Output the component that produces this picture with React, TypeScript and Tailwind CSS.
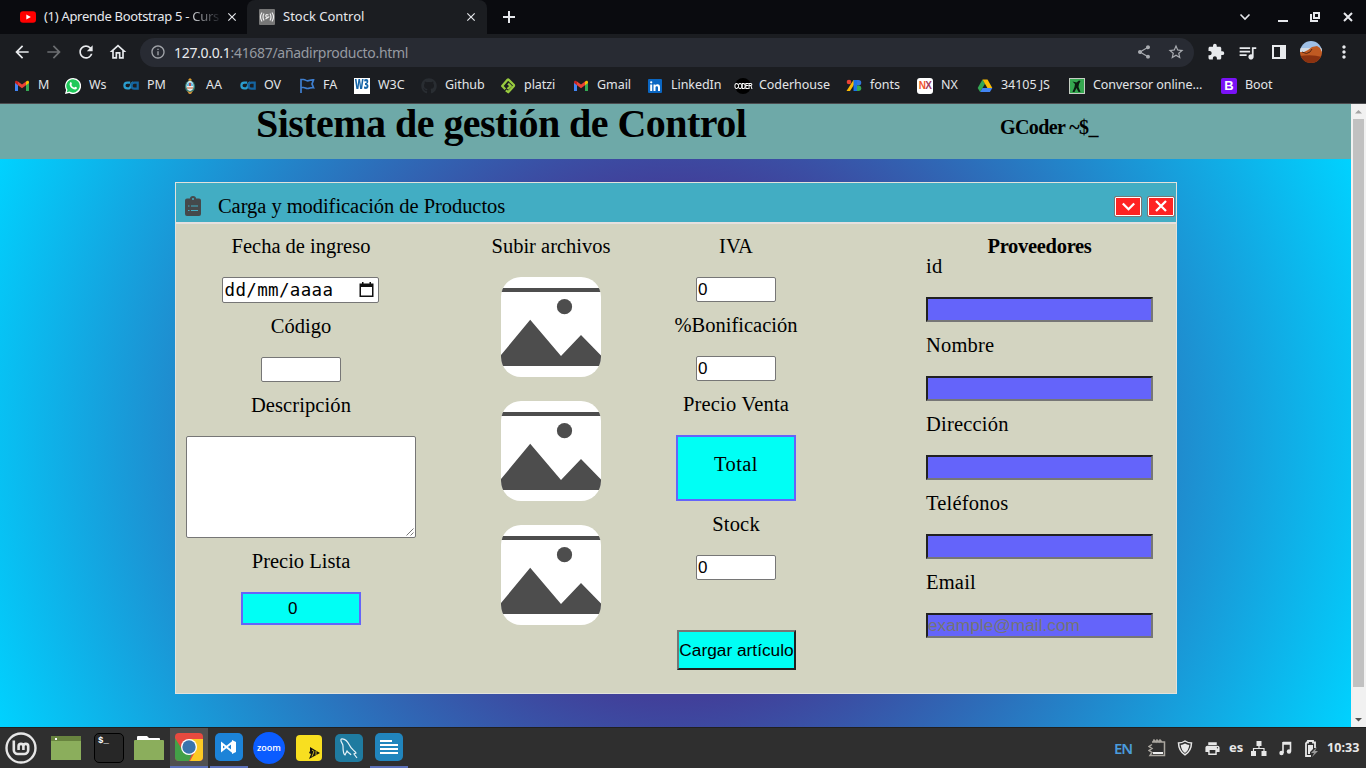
import React from "react";
import { FaClipboardList, FaGithub } from "react-icons/fa";
import {
  MdArrowBack, MdArrowForward, MdRefresh, MdOutlineHome, MdOutlineInfo, MdShare, MdStarOutline,
  MdExtension, MdQueueMusic, MdPrint, MdClose, MdMoreVert,
} from "react-icons/md";

const ui = "font-['Noto_Sans',sans-serif]";
const serif = "font-['Liberation_Serif',serif]";
const sans = "font-['Liberation_Sans',sans-serif]";

const Gmail = () => (
  <svg width="16" height="16" viewBox="0 0 16 16">
    <path d="M1 4v9h3V6.200z" fill="#4285f4" />
    <path d="M15 4v9h-3V6.200z" fill="#34a853" />
    <path d="M12 3.600 13 3c1-.6 2 0 2 1.200V5l-3 2.200z" fill="#fbbc04" />
    <path d="M4 3.600 3 3C2 2.400 1 3 1 4.200V5l3 2.200z" fill="#c5221f" />
    <path d="m4 3.600 4 3 4-3v3.600l-4 3-4-3z" fill="#ea4335" />
  </svg>
);
const WhatsApp = () => (
  <svg width="16" height="16" viewBox="0 0 16 16">
    <path d="M8 0a8 8 0 1 1-3.800 15L0 16l1.100-4A8 8 0 0 1 8 0z" fill="#fff" />
    <path d="M8 1.200a6.700 6.700 0 1 1-3.500 12.400l-2.700.7.700-2.600A6.700 6.700 0 0 1 8 1.200z" fill="#1fc95a" />
    <path d="M5.400 4.200c.6-.4 1 0 1.500 1.500.1.500-.6.9-.5 1.200.7 1.400 1.500 2.100 2.900 2.700.4 0 .7-.9 1.100-.8 1.700.7 1.800.9 1.400 1.700-.8 1.400-2.600 1.200-4.500 0C5.100 9 3.600 6.300 5.400 4.200z" fill="#fff" />
  </svg>
);
const Ca = () => (
  <svg width="16" height="16" viewBox="0 0 16 16" fill="none" strokeWidth="2.200">
    <path d="M7.200 4.600H4.300a2.900 2.900 0 0 0 0 5.800H6c2 0 2-5.800 4-5.800" stroke="#2b9fd0" />
    <path d="M14.700 3.400v7.200h-3.200a2.900 2.900 0 0 1 0-5.900h3" stroke="#1564a0" />
  </svg>
);
const Arms = () => (
  <svg width="16" height="16" viewBox="0 0 16 16">
    <path d="m8 0 2 2-2 1.500L6 2z" fill="#e0a030" />
    <ellipse cx="8" cy="8.500" rx="5" ry="6" fill="#357f75" />
    <ellipse cx="8" cy="8" rx="3.600" ry="5" fill="#e8eef2" />
    <path d="M4.500 8A3.600 5 0 0 1 11.500 8z" fill="#63bce9" />
    <path d="M7.200 5h1.600v3H7.200z" fill="#c53428" />
    <path d="M5 9h6v2H5z" fill="#d7a58c" />
    <path d="m5 13 3 1 3-1-2 3H7z" fill="#c98b35" />
  </svg>
);
const Flag = () => (
  <svg width="16" height="16" viewBox="0 0 16 16" fill="none" stroke="#3f7fd0" strokeWidth="1.700">
    <path d="M2 15V1.500h2.500c2 0 2 1.300 4 1.300 2.500 0 3-1.300 6-.9l-1.500 4 1.500 3.800c-3-.5-3.500.8-6 .8-2 0-2-1-4-1H2" />
  </svg>
);
const W3 = () => (
  <span className="flex size-4 items-center justify-center bg-white font-['Open_Sans',sans-serif] text-[12px] leading-none font-extrabold text-[#1565a8]">
    <span className="scale-x-[0.72] scale-y-110 pb-px">W3</span>
  </span>
);
const Platzi = () => (
  <svg width="16" height="16" viewBox="0 0 16 16" fill="none" stroke="#98ca3f" strokeWidth="2.300">
    <path d="M5.300 11.300 2.200 8l5.300-6.200q.6-.6 1.200 0l5 5q.6.700 0 1.400l-5.500 6-2.400-1.800M8 5.600 10.700 8 7.500 11" strokeLinejoin="round" />
  </svg>
);
const LinkedIn = () => (
  <svg width="16" height="16" viewBox="0 0 16 16">
    <rect x="1" y="1" width="14" height="14" rx="1" fill="#0a66c2" />
    <path d="M3.200 6.500h2V13h-2zM4.200 3.200a1.150 1.150 0 1 1 0 2.300 1.150 1.150 0 0 1 0-2.300zM6.500 6.500h2v1c1-1.700 4.500-1.700 4.500 1.500v4h-2V9.500c0-1.800-2.500-1.800-2.500 0V13h-2z" fill="#fff" />
  </svg>
);
const Coder = () => (
  <span className="flex size-4 items-center justify-center rounded-full bg-black font-['Liberation_Sans',sans-serif] text-[6px] leading-none font-bold tracking-[-0.8px] text-white">
    <span className="scale-y-[1.4]">CODER</span>
  </span>
);
const Fonts = () => (
  <svg width="16" height="16" viewBox="0 0 16 16">
    <circle cx="3" cy="4" r="2.300" fill="#ea4335" />
    <path d="M7.500 2H11L4 13H.5z" fill="#fbbc04" />
    <path d="M7.500 2H11v11H7.500z" fill="#1a73e8" />
    <path d="M11 2h1.500a2.700 2.700 0 0 1 0 5.500H11z" fill="#3275dc" />
    <path d="M11 7.500h1.500a2.700 2.700 0 0 1 0 5.500H11z" fill="#34a853" />
  </svg>
);
const Nx = () => (
  <span className="flex size-4 items-center justify-center rounded-[3px] bg-white font-['Liberation_Sans',sans-serif] text-[10px] font-bold tracking-[-0.7px] text-[#f0562b]">
    N<span className="text-[#a03a60]">X</span>
  </span>
);
const Drive = () => (
  <svg width="16" height="16" viewBox="0 0 16 16">
    <path d="M5.500 1.500.7 10l2.400 4L8 5.700z" fill="#34a853" />
    <path d="M5.500 1.500h5l4.800 8.500h-4.900z" fill="#fbbc04" />
    <path d="M5.500 10h9.800l-2.400 4H3.100z" fill="#4285f4" />
  </svg>
);
const Conv = () => (
  <svg width="16" height="16" viewBox="0 0 16 16">
    <rect x=".5" y=".5" width="15" height="15" fill="#35a850" stroke="#c5cec3" />
    <path d="m3.500 3.500 4 1 2.500-2 1.500.5-1.500 3-.5 3 2 5h-2l-2-4-2 4h-2l2-5 .5-3z" fill="#0b1c10" />
  </svg>
);
const Boot = () => (
  <span className="flex size-4 items-center justify-center rounded-[2px] bg-[#7a12f6] font-['Liberation_Sans',sans-serif] text-[13px] leading-none font-bold text-white">B</span>
);

const bookmarks: [string, string, React.ReactNode][] = [
  ["M", "w-[51px]", <Gmail />],
  ["Ws", "w-[58px]", <WhatsApp />],
  ["PM", "w-[59px]", <Ca />],
  ["AA", "w-[58px]", <Arms />],
  ["OV", "w-[59px]", <Ca />],
  ["FA", "w-[55px]", <Flag />],
  ["W3C", "w-[67px]", <W3 />],
  ["Github", "w-[79px]", <FaGithub className="size-4 text-[#292d32]" />],
  ["platzi", "w-[73px]", <Platzi />],
  ["Gmail", "w-[74px]", <Gmail />],
  ["LinkedIn", "w-[88px]", <LinkedIn />],
  ["Coderhouse", "w-[111px]", <Coder />],
  ["fonts", "w-[71px]", <Fonts />],
  ["NX", "w-[60px]", <Nx />],
  ["34105 JS", "w-[92px]", <Drive />],
  ["Conversor online…", "w-[152px]", <Conv />],
  ["Boot", "w-[70px]", <Boot />],
];

function Tabs() {
  return (
    <div className="flex h-[34px] bg-[#0a0b0f] text-[13px] text-[#e6e8ec]">
      <div className="flex w-[247px] items-center pl-5">
        <svg width="16" height="16" viewBox="0 0 16 16">
          <rect y="2.200" width="16" height="11.600" rx="3" fill="#f00" />
          <path d="m6.300 5.500 4.600 2.500-4.600 2.500z" fill="#fff" />
        </svg>
        <span className="ml-2 w-[181px] tracking-[-0.3px] whitespace-nowrap">
          <span>(1) Aprende Bootstrap 5 - </span>
          <span className="bg-linear-to-r from-[#d5d7da] to-[#22242a] bg-clip-text text-transparent">Curs</span>
        </span>
        <MdClose className="size-[14px]" />
      </div>
      <div className="flex w-[240px] items-center rounded-t-lg bg-[#1b1d21] pl-3">
        <svg width="16" height="16" viewBox="0 0 16 16" fill="none" stroke="#eee" strokeWidth="1.200">
          <rect width="16" height="16" rx="1" fill="#777" stroke="none" />
          <path d="M3 3.500Q0 8 3 12.500M5 4.500Q3 8 5 11.500M13 3.500Q16 8 13 12.500M11 4.500Q13 8 11 11.500M9.500 6Q6.500 5 6.800 7t2.400 1-2.700 2" />
        </svg>
        <span className="ml-2 w-[181px]">Stock Control</span>
        <MdClose className="size-[14px]" />
      </div>
      <div className="flex flex-1 items-center pl-[16px]">
        <svg width="12" height="12" viewBox="0 0 12 12" stroke="#e6e8ec" strokeWidth="2"><path d="M6 0v12M0 6h12" /></svg>
      </div>
      <div className="flex w-[128px] items-center">
        <svg width="128" height="34" viewBox="0 0 128 34" fill="none" stroke="#e6e8ec" strokeWidth="2">
          <path d="m2.500 14.500 4.500 4.500 4.500-4.500" strokeWidth="1.600" />
          <path d="M40 21h10" />
          <path d="M76 13h5v5h-5zM73 14v7h7" />
          <path d="m106 13 8 8m0-8-8 8" />
        </svg>
      </div>
    </div>
  );
}

function Toolbar() {
  return (
    <div className="flex h-[36px] items-center bg-[#1b1d21] text-[#e8eaed]">
      <MdArrowBack className="ml-3 size-5" />
      <MdArrowForward className="ml-3 size-5 text-[#6c6e71]" />
      <MdRefresh className="ml-3 size-5" />
      <MdOutlineHome className="ml-3 size-5" />
      <div className="ml-3 flex h-[29px] w-[1054px] items-center rounded-full bg-[#282b33] pl-[10px]">
        <MdOutlineInfo className="size-4 text-[#a2a5aa]" />
        <span className="ml-2 w-[962px] text-[14px] tracking-[-0.31px] text-[#969aa1]"><span className="text-[#e8eaed]">127.0.0.1</span>:41687/añadirproducto.html</span>
        <MdShare className="size-4 text-[#a9acb1]" />
        <MdStarOutline className="ml-[15px] size-[18px] text-[#a9acb1]" />
      </div>
      <MdExtension className="ml-[13px] size-[18px]" />
      <MdQueueMusic className="ml-[12px] size-[21px]" />
      <svg className="ml-[14px]" width="14" height="14" viewBox="0 0 14 14"><path d="M0 0h14v14H0zM2 2v10h6V2z" fill="#e8eaed" fillRule="evenodd" /></svg>
      <svg className="ml-[14px]" width="22" height="22" viewBox="0 0 22 22">
        <clipPath id="av"><circle cx="11" cy="11" r="11" /></clipPath>
        <g clipPath="url(#av)">
          <path d="M0 0h22v10H0z" fill="#9fc0e6" />
          <path d="M0 7h22v5H0z" fill="#d3dbe4" />
          <path d="M0 11h4l4-2 4-3 5-1 3 2 2 4v11H0z" fill="#c05a22" />
          <path d="M0 15q12-2 22 1v6H0z" fill="#8b3210" />
          <path d="M2 11q5 3 8 0l2-3" stroke="#542714" fill="none" />
        </g>
      </svg>
      <MdMoreVert className="ml-[12px] size-5" />
    </div>
  );
}

function Bookmarks() {
  return (
    <div className="flex h-[33px] items-center bg-[#1b1d21] pb-[2px] pl-[14px] text-[12.500px] tracking-[-0.05px] text-[#e3e5e8]">
      {bookmarks.map(([name, width, icon], i) => (
        <div key={i} className={"flex shrink-0 items-center gap-2 whitespace-nowrap " + width}>
          {icon}
          <span>{name}</span>
        </div>
      ))}
    </div>
  );
}

const Label = ({ children, className = "" }: { children: React.ReactNode; className?: string }) => (
  <div className={"h-5 text-[20.500px] leading-[18px] whitespace-nowrap " + className}>{children}</div>
);

const Small = ({ value = "", className = "" }: { value?: string; className?: string }) => (
  <div className={"mt-5 flex h-[25px] w-20 items-center rounded-[2px] border border-[#767676] bg-white pl-px text-[17px] leading-none " + sans + " " + className}>{value}</div>
);

const Picture = () => (
  <svg className="rounded-[20px]" width="100" height="100" viewBox="0 0 100 100">
    <path d="M0 0h100v100H0z" fill="#fff" />
    <path d="M0 11h100v4H0z" fill="#4d4d4d" />
    <circle cx="63.500" cy="29.700" r="7.600" fill="#4d4d4d" />
    <path d="M0 89V78l29.200-35.200L60 79l20-21 20 20.500V89z" fill="#4d4d4d" />
  </svg>
);

const suppliers = ["id", "Nombre", "Dirección", "Teléfonos", "Email"];

function ProductWindow() {
  return (
    <section className={"mt-[23px] ml-[175px] flex h-[512px] w-[1002px] flex-col border border-[#e2e2dc] bg-[#d3d4c1] text-black " + serif}>
      <header className="flex h-[41px] shrink-0 items-center border-b-2 border-[#e5e0df] bg-[#42adc3] pt-[7px]">
        <svg className="ml-[9px]" width="16" height="20" viewBox="0 0 16 20">
          <path d="M2 2.500h3a3 2.500 0 0 1 6 0h3a2 2 0 0 1 2 2V18a2 2 0 0 1-2 2H2a2 2 0 0 1-2-2V4.500a2 2 0 0 1 2-2z" fill="#45494b" />
          <circle cx="8" cy="3" r="1" fill="#42adc3" />
          <path d="M3 10h1.500M6 10h7M3 14.500h1.500M6 14.500h7" stroke="#42adc3" strokeWidth="1.200" />
        </svg>
        <h2 className="ml-[17px] w-[896px] text-[20.500px] leading-5 tracking-[-0.05px]">Carga y modificación de Productos</h2>
        <div className="flex gap-[5px]">
          <span className="flex h-[21px] w-[28px] items-center justify-center rounded-[2px] border border-[#777] bg-[#ff2222] inset-ring-1 inset-ring-white">
            <svg width="13" height="9" viewBox="0 0 13 9" fill="none" stroke="#fff" strokeWidth="2.300"><path d="m.8 1.500 5.700 5.700 5.700-5.700" /></svg>
          </span>
          <span className="flex h-[21px] w-[28px] items-center justify-center rounded-[2px] border border-[#777] bg-[#ff2222] inset-ring-1 inset-ring-white">
            <svg width="12" height="12" viewBox="0 0 12 12" fill="none" stroke="#fff" strokeWidth="2.300"><path d="m1 1 10 10M11 1 1 11" /></svg>
          </span>
        </div>
      </header>
      <div className="flex pt-[13px]">
        <div className="ml-[10px] flex w-[230px] flex-col items-center">
          <Label>Fecha de ingreso</Label>
          <div className="mt-5 mr-[2px] flex h-[26px] w-[157px] items-center rounded-[2px] border border-[#767676] bg-white pl-[2px] font-['DejaVu_Sans_Mono',monospace] text-[17.500px] leading-none tracking-[0.350px]">
            <span className="w-[134px] pt-[2px]">dd/mm/aaaa</span>
            <svg width="15" height="16" viewBox="0 0 15 16"><path d="M3 0h1.500v1.500h6V0H12v1.500h2.500V15H.5V1.500H3zM2 5v8.500h11V5z" fill="#111" fillRule="evenodd" /></svg>
          </div>
          <Label className="mt-[14px]">Código</Label>
          <Small />
          <Label className="mt-[14px] tracking-[0.1px]">Descripción</Label>
          <div className="mt-5 flex h-[102px] w-[230px] items-end justify-end rounded-[2px] border border-[#767676] bg-white p-[1px]">
            <svg width="8" height="8" viewBox="0 0 8 8" stroke="#555" strokeWidth=".8"><path d="m.5 7.500 7-7m-3 7 3-3" /></svg>
          </div>
          <Label className="mt-[14px]">Precio Lista</Label>
          <div className={"mt-5 flex h-[33px] w-[120px] items-center border-2 border-[#6464fa] bg-[#00fff5] pl-[45px] text-[17px] leading-none " + sans}>0</div>
        </div>
        <div className="ml-[85px] flex w-[100px] flex-col items-center">
          <Label>Subir archivos</Label>
          <div className="mt-5 flex flex-col gap-6">
            <Picture />
            <Picture />
            <Picture />
          </div>
        </div>
        <div className="ml-[75px] flex w-[120px] flex-col items-center">
          <Label>IVA</Label>
          <Small value="0" />
          <Label className="mt-[14px]">%Bonificación</Label>
          <Small value="0" />
          <Label className="mt-[14px] tracking-[0.2px]">Precio Venta</Label>
          <div className="mt-5 flex h-[66px] w-[120px] justify-center border-2 border-[#6464fa] bg-[#00fff5] pt-[18px]">
            <Label className="tracking-[0.4px]">Total</Label>
          </div>
          <Label className="mt-[14px] tracking-[0.2px]">Stock</Label>
          <Small value="0" />
          <div className={"mt-[50px] ml-[1px] flex h-10 w-[119px] items-center justify-center border-2 border-t-[#767676] border-r-[#212121] border-b-[#212121] border-l-[#767676] bg-[#00fff5] pt-px text-[17.300px] whitespace-nowrap " + sans}>Cargar artículo</div>
        </div>
        <div className="ml-[130px] flex w-[227px] flex-col">
          <Label className="text-center font-bold tracking-[-0.3px]">Proveedores</Label>
          {suppliers.map((name) => (
            <div key={name} className="mb-[14px]">
              <Label className="tracking-[0.2px]">{name}</Label>
              <div className={"mt-5 flex h-[25px] items-center border-2 border-t-[#212121] border-r-[#767676] border-b-[#767676] border-l-[#212121] bg-[#6464fa] text-[17.300px] leading-none text-[#757575] " + sans}>
                {name === "Email" ? "example@mail.com" : ""}
              </div>
            </div>
          ))}
        </div>
      </div>
    </section>
  );
}

function Taskbar() {
  return (
    <div className="flex h-[41px] items-center border-t border-[#202020] bg-[#2f2f2f] text-[#e8e8e8]">
      <svg className="ml-[5px]" width="32" height="32" viewBox="0 0 32 32" fill="none" stroke="#e6e6e6" strokeWidth="2.600">
        <circle cx="16" cy="16" r="14.500" strokeWidth="2.400" />
        <path d="M8.800 8.500V18a4 4 0 0 0 4 4h6.400a4 4 0 0 0 4-4v-3.700a2.400 2.400 0 0 0-4.800 0V18M18.400 14.300a2.400 2.400 0 0 0-4.800 0V18" />
      </svg>
      <svg className="ml-[14px]" width="30" height="24" viewBox="0 0 30 24"><path d="M0 0h30v24H0z" fill="#8bae5c" /><path d="M0 0h30v5H0z" fill="#68843f" /><path d="M4 2h2v2H4z" fill="#fff" /></svg>
      <div className="ml-[13px] h-[30px] w-[30px] rounded-[5px] border border-black bg-[#272727] pt-px pl-[3px] font-['Liberation_Mono',monospace] text-[9px] font-bold text-white">$_</div>
      <svg className="ml-[10px]" width="30" height="26" viewBox="0 0 30 26"><path d="M3 2q0-1 1-1h9l2 2h10q1 0 1 1v4H3z" fill="#fff" /><path d="M0 6q0-1 1-1h28q1 0 1 1v19H0z" fill="#8bae5c" /></svg>
      <div className="ml-[6px] flex h-[40px] w-[38px] items-center justify-center border-b-2 border-[#5b70b8] bg-[#505050]">
        <svg width="28" height="28" viewBox="0 0 28 28">
          <rect width="28" height="28" rx="4" fill="#e64a3f" />
          <path d="M14 6h14v18a4 4 0 0 1-4 4H15l6-11z" fill="#fbc924" />
          <path d="M0 5l8 13 9 3-3 7H4a4 4 0 0 1-4-4z" fill="#43a047" />
          <circle cx="14" cy="14" r="8" fill="#fff" /><circle cx="14" cy="14" r="6.700" fill="#3974ad" />
        </svg>
      </div>
      <div className="ml-[2px] flex h-[40px] w-[38px] items-center justify-center border-b-2 border-[#5b70b8]">
        <svg width="28" height="28" viewBox="0 0 28 28"><rect width="28" height="28" rx="5" fill="#1c83d8" /><path d="m7 10.500 10 8V9.500l-10 8z" fill="none" stroke="#fff" strokeWidth="2" /><path d="m17 7 4 2v10l-4 2z" fill="#fff" /></svg>
      </div>
      <div className="ml-[5px] flex size-8 items-center justify-center rounded-full bg-[#0b5cff] font-['Open_Sans',sans-serif] text-[9px] font-semibold text-white">zoom</div>
      <svg className="ml-[11px]" width="26" height="26" viewBox="0 0 26 26"><rect width="26" height="26" rx="4" fill="#f8df20" /><path d="m14 12 10 6-11 6 2-5-2-1 1-2z" fill="#111" /><path d="m16 15 2 1.500-2 5M20 16v4" fill="none" stroke="#f8df20" strokeWidth=".8" /></svg>
      <svg className="ml-[13px]" width="28" height="28" viewBox="0 0 28 28"><rect width="28" height="28" rx="5" fill="#1f7ba0" /><path d="M6 5c4-1 7 3 9 7 1 3 5 5 6 7l-2 1 3 4M6 5c-1 3 2 4 2 7 0 4 0 8 2 9l2-4c1 2 3 2 4 4" fill="none" stroke="#e7f3f8" strokeWidth="1.200" /></svg>
      <div className="ml-[7px] flex h-[40px] w-[38px] items-center justify-center border-b-2 border-[#5b70b8]">
        <svg width="28" height="28" viewBox="0 0 28 28"><rect width="28" height="28" rx="5" fill="#2185bd" /><path d="M5 8h12M5 12h18M5 16h18M5 20h18" stroke="#fff" strokeWidth="2" /></svg>
      </div>
      <div className="flex-1" />
      <span className="w-[34px] text-[15px] font-semibold tracking-[-1px] text-[#4a9bdc]">EN</span>
      <svg width="18" height="18" viewBox="0 0 18 18" fill="none" stroke="#aaa69f" strokeWidth="1.500"><path d="M4 3h12.500v13.500H2l2-3-3-2 3-2-3-2 3-2M5 3l1-2 2 2 1-2 2 2 1-2 2 2" /><path d="M5 14h10" stroke="#eee" strokeWidth="2" /></svg>
      <svg className="ml-[11px]" width="16" height="16" viewBox="0 0 16 16"><path d="M8 1q3 2 6.500 2-.2 8-6.500 11.800Q1.700 11 1.500 3 5 3 8 1z" fill="none" stroke="#e8e8e8" strokeWidth="1.500" /><path d="M8 3.500q2 1.400 4.300 1.500-.5 5.300-4.300 8-3.800-2.700-4.300-8Q6 4.900 8 3.500z" fill="#e8e8e8" /></svg>
      <MdPrint className="ml-[11px] size-[17px]" />
      <span className="ml-[8px] w-[22px] text-[13px] font-bold">es</span>
      <svg width="16" height="16" viewBox="0 0 16 16"><path d="M5.500 1h5v5h-5zM0 11h5v5H0zM10.500 11h5v5h-5z" fill="#e8e8e8" /><path d="M8 5v3.500M2.500 12V8.500H13V12" fill="none" stroke="#e8e8e8" strokeWidth="1.200" /></svg>
      <svg className="ml-[10px]" width="16" height="16" viewBox="0 0 16 16"><path d="M6 2.500h7.500V11M6 2v11M6 4h7.500" fill="none" stroke="#e8e8e8" strokeWidth="1.600" /><circle cx="4.500" cy="13" r="2.200" fill="#e8e8e8" /><circle cx="12" cy="11.500" r="2.200" fill="#e8e8e8" /></svg>
      <svg className="ml-[10px]" width="16" height="17" viewBox="0 0 16 17"><path d="M3 2.500h2V1h5v1.500h2V8M3 2.500V16h5" fill="none" stroke="#e8e8e8" strokeWidth="1.800" /><path d="M5 5h5v4l-3 3v2H5z" fill="#e8e8e8" /><path d="M14 7 8 13h3l-2 4 6-6h-3z" fill="#999" /></svg>
      <span className="ml-[8px] w-[39px] text-[12.500px] font-bold tracking-[0.1px]">10:33</span>
    </div>
  );
}

export default function App() {
  return (
    <div className={"flex h-[768px] w-[1366px] flex-col overflow-hidden " + ui}>
      <Tabs />
      <Toolbar />
      <Bookmarks />
      <div className="h-px bg-[#4c4d50]" />
      <div className="flex h-[623px]">
        <main className="flex w-[1351px] flex-col">
          <header className={"flex h-[55px] bg-[#6ea9a8] font-bold text-black " + serif}>
            <h1 className="ml-[256px] w-[744px] text-[40px] leading-[40px] tracking-[-0.54px] whitespace-nowrap">Sistema de gestión de Control</h1>
            <span className="mt-[13px] text-[20px] leading-5 tracking-[-0.6px]">GCoder ~$_</span>
          </header>
          <div className="flex-1 bg-[radial-gradient(circle_at_center,#41409a_35%,#00d2ff_100%)]">
            <div className="flex">
              <ProductWindow />
            </div>
          </div>
        </main>
        <div className="flex w-[15px] flex-col items-center bg-[#f1f1f1]">
          <svg width="15" height="15" viewBox="0 0 15 15"><path d="M4 9.500 7.500 6 11 9.500z" fill="#a3a3a3" /></svg>
          <div className="h-[568px] w-[11px] bg-[#c1c1c1]" />
          <div className="flex-1" />
          <svg width="15" height="15" viewBox="0 0 15 15"><path d="M4 6 7.500 9.500 11 6z" fill="#505050" /></svg>
        </div>
      </div>
      <Taskbar />
    </div>
  );
}
